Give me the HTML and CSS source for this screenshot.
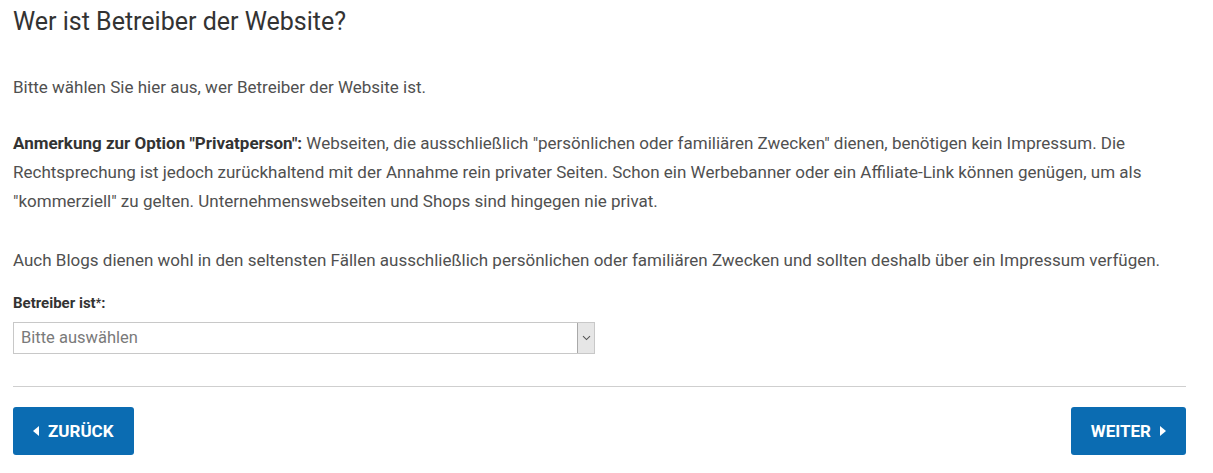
FILE: index.html
```html
<!DOCTYPE html>
<html lang="de">
<head>
<meta charset="utf-8">
<title>Betreiber</title>
<link rel="stylesheet" href="styles.css">
</head>
<body>
<div class="page">
  <h1 class="title">Wer ist Betreiber der Website?</h1>
  <p class="text intro">Bitte wählen Sie hier aus, wer Betreiber der Website ist.</p>
  <p class="text"><strong>Anmerkung zur Option "Privatperson":</strong> Webseiten, die ausschließlich "persönlichen oder familiären Zwecken" dienen, benötigen kein Impressum. Die Rechtsprechung ist jedoch zurückhaltend mit der Annahme rein privater Seiten. Schon ein Werbebanner oder ein Affiliate-Link können genügen, um als "kommerziell" zu gelten. Unternehmenswebseiten und Shops sind hingegen nie privat.</p>
  <p class="text">Auch Blogs dienen wohl in den seltensten Fällen ausschließlich persönlichen oder familiären Zwecken und sollten deshalb über ein Impressum verfügen.</p>
  <label class="label" for="op">Betreiber ist<span class="req">*</span>:</label>
  <div class="select" id="op">
    <span class="select-value">Bitte auswählen</span>
    <span class="select-arrow"><svg width="9" height="6" viewBox="0 0 9 6"><path d="M1 1.2 L4.5 4.6 L8 1.2" fill="none" stroke="#555" stroke-width="1.1"/></svg></span>
  </div>
  <hr class="divider">
  <div class="actions">
    <button class="btn"><span class="tri tri-left"></span>ZURÜCK</button>
    <button class="btn">WEITER<span class="tri tri-right"></span></button>
  </div>
</div>
</body>
</html>
```
FILE: styles.css
```css
html, body {
  margin: 0;
  padding: 0;
  background: #fff;
}
.page {
  width: 1173px;
  padding: 0 0 0 13px;
  font-family: Roboto, "Liberation Sans", sans-serif;
  color: #444;
}
.title {
  margin: 0;
  padding-top: 5px;
  font-size: 25px;
  line-height: 33px;
  font-weight: 400;
  color: #333;
}
.text {
  margin: 0 0 30px 0;
  font-size: 17px;
  line-height: 29px;
  font-weight: 400;
  color: #505050;
}
.text strong {
  font-weight: 700;
  color: #333;
}
.intro {
  margin-top: 35px;
  margin-bottom: 27px;
}
.label {
  display: block;
  margin-top: -12px;
  font-size: 15px;
  line-height: 20px;
  font-weight: 700;
  color: #333;
}
.req {
  font-size: 12px;
  vertical-align: 1px;
}
.select {
  margin-top: 9px;
  width: 580px;
  height: 30px;
  border: 1px solid #c8c8c8;
  display: flex;
  align-items: stretch;
  justify-content: space-between;
  box-sizing: content-box;
}
.select-value {
  padding-left: 7px;
  font-size: 16.5px;
  line-height: 30px;
  color: #7a7a7a;
}
.select-arrow {
  width: 16px;
  background: #e6e6e6;
  border-left: 1px solid #a9a9a9;
  display: flex;
  align-items: center;
  justify-content: center;
}
.divider {
  margin: 32px 0 0 0;
  border: 0;
  border-top: 1px solid #cfcfcf;
  height: 0;
}
.actions {
  margin-top: 20px;
  display: flex;
  justify-content: space-between;
}
.btn {
  height: 48px;
  padding: 0 20px;
  border: 0;
  border-radius: 3px;
  background: #0b6cb2;
  color: #fff;
  font-family: Roboto, "Liberation Sans", sans-serif;
  font-size: 17px;
  font-weight: 700;
  display: flex;
  align-items: center;
  gap: 9px;
}
.tri {
  width: 0;
  height: 0;
  border-top: 5px solid transparent;
  border-bottom: 5px solid transparent;
}
.tri-left {
  border-right: 6px solid #fff;
}
.tri-right {
  border-left: 6px solid #fff;
}
```
